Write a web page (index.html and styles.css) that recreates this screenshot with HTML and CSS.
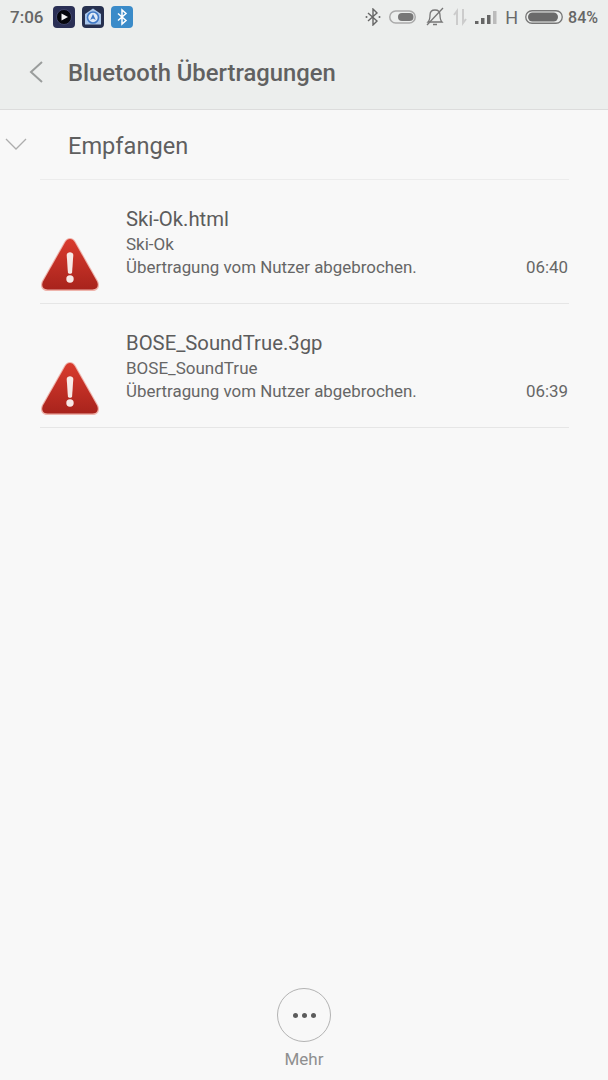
FILE: index.html
```html
<!DOCTYPE html>
<html lang="de">
<head>
    <meta charset="UTF-8">
    <title>Bluetooth Übertragungen</title>
    <link rel="stylesheet" href="styles.css">
</head>
<body>
<div class="phone">
    <header class="top">
        <div class="status">
            <span class="clock">7:06</span>
            <div class="app-icons">
                <span class="app app-player">
                    <svg width="22" height="22" viewBox="0 0 22 22"><circle cx="11" cy="11" r="7.500" fill="#05060c" stroke="#4a4f78" stroke-width=".8"/><path d="M8.500 7.500 15 11l-6.500 3.500z" fill="#f4f4f4"/></svg>
                </span>
                <span class="app app-nav">
                    <svg width="22" height="22" viewBox="0 0 22 22"><path d="M11 2.500 19 8v10.500H3V8z" fill="#a9c6ea"/><circle cx="11" cy="11.500" r="5.500" fill="#dfeaf7" stroke="#3f78c4" stroke-width="1.600"/><path d="M11 8l2.800 6-2.800-1.400L8.200 14z" fill="#3f78c4"/></svg>
                </span>
                <span class="app app-bt">
                    <svg width="22" height="22" viewBox="0 0 22 22"><path d="M7 7.500 15 14.500 11 18V4l4 3.500L7 14.500" fill="none" stroke="#fff" stroke-width="1.500"/></svg>
                </span>
            </div>
            <div class="indicators">
                <svg width="16" height="18" viewBox="0 0 16 18"><path d="M3 5l9 8-4 4V1l4 4-9 8" fill="none" stroke="#666" stroke-width="1.400"/><circle cx="1.500" cy="9" r="1" fill="#666"/><circle cx="14.500" cy="9" r="1" fill="#666"/></svg>
                <svg width="28" height="16" viewBox="0 0 28 16"><rect x=".75" y="2" width="25.500" height="12" rx="6" fill="none" stroke="#aaa" stroke-width="1.500"/><rect x="9" y="4" width="15.500" height="8" rx="4" fill="#777"/></svg>
                <svg width="20" height="22" viewBox="0 0 20 22"><path d="M3 16c2-2 2-4 2-7 0-3 2-5 5-5s5 2 5 5c0 3 0 5 2 7z" fill="none" stroke="#777" stroke-width="1.300"/><path d="M8 18.500h4M2 19 18 2" stroke="#777" stroke-width="1.300" fill="none"/></svg>
                <svg width="14" height="18" viewBox="0 0 14 18"><path d="M4 17V3L1 7M10 1v14l3-4" fill="none" stroke="#ccc" stroke-width="2"/></svg>
                <svg class="signal" width="22" height="16" viewBox="0 0 22 16"><path d="M0 12h3.500v3H0zM6 9h3.500v6H6zM12 6h3.500v9H12z" fill="#666"/><path d="M18 2h3.500v13H18z" fill="#bbb"/></svg>
                <span class="net">H</span>
                <svg class="battery" width="39" height="16" viewBox="0 0 39 16"><rect x=".75" y="1.750" width="36.500" height="12.500" rx="6.250" fill="none" stroke="#777" stroke-width="1.300"/><rect x="3" y="3.500" width="30" height="9" rx="4.500" fill="#6a6a6a"/></svg>
                <span class="percent">84%</span>
            </div>
        </div>
        <div class="title-bar">
            <svg class="back" width="16" height="24" viewBox="0 0 16 24"><path d="M14 2 3 12l11 10" fill="none" stroke="#9a9d9c" stroke-width="2"/></svg>
            <h1>Bluetooth Übertragungen</h1>
        </div>
    </header>

    <main class="content">
        <div class="group-head">
            <svg class="chevron" width="22" height="13" viewBox="0 0 22 13"><path d="M1 1l10 10L21 1" fill="none" stroke="#adadad" stroke-width="1.300"/></svg>
            <h2>Empfangen</h2>
        </div>
        <ul class="transfers">
            <li class="transfer">
                <svg class="warn" width="60" height="60" viewBox="0 0 60 60"><use href="#warn-icon"/></svg>
                <div class="info">
                    <div class="name">Ski-Ok.html</div>
                    <div class="sub">Ski-Ok</div>
                    <div class="msg-row"><span>Übertragung vom Nutzer abgebrochen.</span><span>06:40</span></div>
                </div>
            </li>
            <li class="transfer">
                <svg class="warn" width="60" height="60" viewBox="0 0 60 60"><use href="#warn-icon"/></svg>
                <div class="info">
                    <div class="name">BOSE_SoundTrue.3gp</div>
                    <div class="sub">BOSE_SoundTrue</div>
                    <div class="msg-row"><span>Übertragung vom Nutzer abgebrochen.</span><span>06:39</span></div>
                </div>
            </li>
        </ul>
    </main>

    <footer class="more">
        <button class="more-btn"><i></i><i></i><i></i></button>
        <span>Mehr</span>
    </footer>
</div>

<svg class="defs" width="0" height="0">
    <defs>
        <linearGradient id="warn-fill" x1="0" y1="0" x2="0" y2="1">
            <stop offset="0" stop-color="#d93b2e"/>
            <stop offset="1" stop-color="#a8231c"/>
        </linearGradient>
        <g id="warn-icon">
            <path d="M31 4c2.500 0 4 1.200 5.500 3.500L59 47c2.500 5 0 10-5 10H8c-5 0-7.500-5-5-10L25.500 7.500C27 5.200 28.500 4 31 4z" fill="#eeb4ac"/>
            <path d="M31 5c2 0 3.400 1 4.600 3L58 47.500c2 4.500 0 8-4.500 8h-45c-4.500 0-6.500-3.500-4.500-8L26.400 8C27.600 6 29 5 31 5z" fill="url(#warn-fill)"/>
            <path d="M27.700 21c0-3.800 6.600-3.800 6.600 0l-1.200 17.500c-.2 1.800-4 1.800-4.200 0z" fill="#f7e9e6"/>
            <circle cx="31" cy="45" r="3.700" fill="#f7e9e6"/>
        </g>
    </defs>
</svg>
</body>
</html>
```

FILE: styles.css
```css
* {
    margin: 0;
    padding: 0;
    box-sizing: border-box;
}

html, body {
    height: 100%;
}

body {
    background: #f8f8f8;
    color: #5f5f5f;
    font-family: "Roboto", "Liberation Sans", sans-serif;
}

.phone {
    display: flex;
    flex-direction: column;
    height: 1080px;
}

.top {
    height: 110px;
    background: #eceeed;
    border-bottom: 1px solid #dcdcdc;
}

.status {
    display: flex;
    align-items: center;
    height: 34px;
    padding: 0 10px;
}

.clock {
    font-size: 17px;
    font-weight: 500;
    color: #666;
    width: 43px;
}

.app-icons {
    display: flex;
    gap: 7px;
}

.app {
    display: block;
    width: 22px;
    height: 22px;
    border-radius: 4px;
}

.app-player {
    background: #2a2f55;
}

.app-nav {
    background: #26304f;
}

.app-bt {
    background: #3a8bc9;
}

.indicators {
    display: flex;
    align-items: center;
    gap: 8px;
    margin-left: auto;
}

.net {
    font-size: 18px;
    color: #6a6a6a;
    margin-right: -1px;
}

.percent {
    font-size: 16px;
    font-weight: 500;
    color: #666;
    margin-left: -4px;
}

.title-bar {
    display: flex;
    align-items: center;
    height: 76px;
    padding: 2px 0 0 28px;
}

.title-bar h1 {
    margin-left: 24px;
    font-size: 23.8px;
    font-weight: 500;
    color: #616161;
}

.back {
    margin-top: -2px;
}

.content {
    flex: 1;
}

.group-head {
    display: flex;
    align-items: center;
    height: 69px;
    padding-left: 5px;
    padding-right: 39px;
}

.group-head h2 {
    margin: 2px 0 0 41px;
    font-size: 23.6px;
    font-weight: 400;
    color: #5f5f5f;
}

.transfers {
    list-style: none;
    margin: 0 39px 0 40px;
    border-top: 1px solid #ececec;
}

.transfer {
    height: 124px;
    border-bottom: 1px solid #e6e6e6;
    display: flex;
}

.warn {
    margin: 54px 0 0 -1px;
    flex: none;
}

.info {
    flex: 1;
    margin-left: 27px;
    padding-top: 26px;
}

.name {
    font-size: 20.300px;
    line-height: 26px;
    margin-bottom: 1px;
    color: #5c5c5c;
}

.sub {
    font-size: 17px;
    line-height: 22px;
    color: #666;
}

.msg-row {
    display: flex;
    justify-content: space-between;
    padding-right: 1px;
    font-size: 16.900px;
    line-height: 24px;
    color: #666;
}

.more {
    display: flex;
    flex-direction: column;
    align-items: center;
    gap: 7px;
    height: 92px;
    color: #8f8f8f;
    font-size: 17px;
}

.more-btn {
    display: flex;
    align-items: center;
    justify-content: center;
    gap: 4px;
    width: 54px;
    height: 54px;
    background: transparent;
    border: 1px solid #b3b3b3;
    border-radius: 50%;
}

.more-btn i {
    width: 5px;
    height: 5px;
    background: #5c5c5c;
    border-radius: 50%;
}

.defs {
    position: absolute;
}
```
